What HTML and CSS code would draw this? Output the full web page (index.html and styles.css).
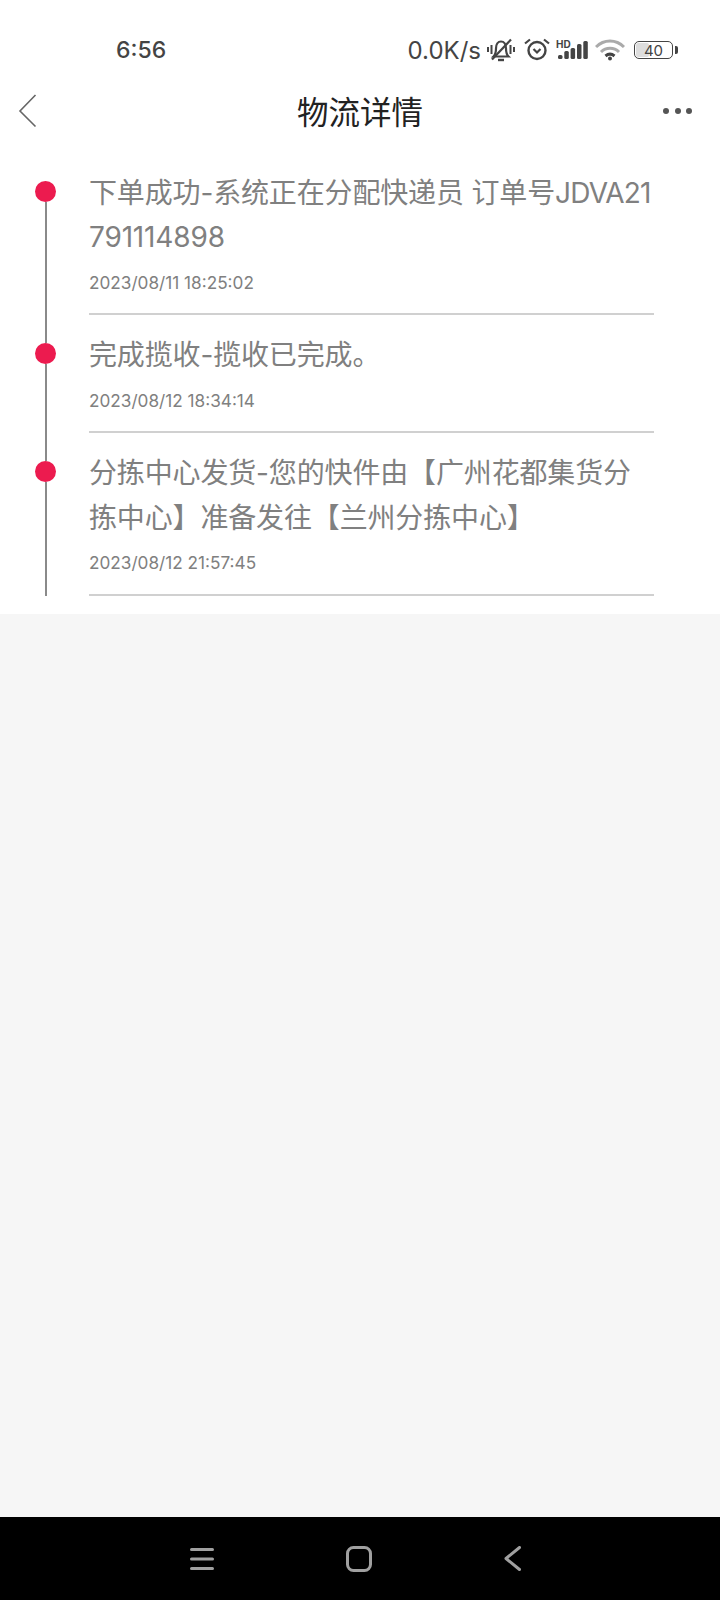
FILE: index.html
```html
<!DOCTYPE html>
<html lang="zh-CN">
<head>
    <meta charset="UTF-8">
    <meta name="viewport" content="width=device-width, initial-scale=1.0">
    <title>物流详情</title>
    <link rel="stylesheet" href="styles.css">
</head>
<body>
    <div class="phone">
        <!-- Status bar -->
        <div class="status-bar">
            <span class="clock">6:56</span>
            <div class="status-right">
                <span class="speed">0.0K/s</span>
                <svg class="icon-bell" width="30" height="24" viewBox="0 0 30 24" fill="none" stroke="#444" stroke-width="2.2">
                    <path d="M7.500 18.500c2-2 2.500-4 2.500-8 0-4 2-7 5-7s5 3 5 7c0 4 .5 6 2.500 8z"/>
                    <path d="M12 22h6" stroke-width="2.400"/>
                    <path d="M6 21.500L25 1.500"/>
                    <path d="M2 9v5M5.500 7v9M24.500 7v9M28 9v5" stroke-width="2"/>
                </svg>
                <svg class="icon-alarm" width="28" height="24" viewBox="0 0 28 24" fill="none" stroke="#444" stroke-width="2.4">
                    <circle cx="14" cy="12.500" r="8.500"/>
                    <path d="M10.500 11l3.500 3.500 3.500-3.500" stroke-width="2.200"/>
                    <path d="M2 5.500L7 1.500M26 5.500l-5-4" stroke-width="2.200"/>
                </svg>
                <svg class="icon-signal" width="33" height="22" viewBox="0 0 33 22">
                    <text x="1" y="9" class="hd-text">HD</text>
                    <rect x="3" y="16" width="4.500" height="4" rx="1.500" fill="#444"/>
                    <rect x="9.300" y="12" width="4.500" height="8" rx="1.500" fill="#444"/>
                    <rect x="15.600" y="9" width="4.500" height="11" rx="1.500" fill="#444"/>
                    <rect x="22" y="5" width="4.500" height="15" rx="1.500" fill="#444"/>
                    <rect x="28.300" y="2" width="4.500" height="18" rx="1.500" fill="#444"/>
                </svg>
                <svg class="icon-wifi" width="30" height="22" viewBox="0 0 30 22" fill="none" stroke="#aaa" stroke-width="3">
                    <path d="M1 8C9 0 21 0 29 8"/>
                    <path d="M6 13c5-5 13-5 18 0"/>
                    <path d="M10.500 17c3-2.500 6-2.500 9 0" stroke="#444"/>
                    <circle cx="15" cy="19.500" r="2" fill="#444" stroke="none"/>
                </svg>
                <div class="battery">
                    <div class="battery-body">
                        <div class="battery-fill"></div>
                        <span class="battery-num">40</span>
                    </div>
                    <div class="battery-tip"></div>
                </div>
            </div>
        </div>

        <!-- Title bar -->
        <div class="title-bar">
            <svg class="back" width="20" height="34" viewBox="0 0 20 34" fill="none" stroke="#666" stroke-width="1.600">
                <path d="M17.500 1L2 17l15.500 15.500"/>
            </svg>
            <h1 class="title">物流详情</h1>
            <div class="more"><i></i><i></i><i></i></div>
        </div>

        <!-- Tracking list -->
        <div class="track">
            <div class="track-item first">
                <div class="rail">
                    <div class="rail-top"></div>
                    <div class="dot"></div>
                    <div class="rail-line"></div>
                </div>
                <div class="track-body">
                    <div class="track-text no-wrap">下单成功-系统正在分配快递员 订单号<span class="order-no">JDVA21</span><br>791114898</div>
                    <div class="track-date">2023/08/11 18:25:02</div>
                </div>
            </div>
            <div class="track-item">
                <div class="rail">
                    <div class="rail-top"></div>
                    <div class="dot"></div>
                    <div class="rail-line"></div>
                </div>
                <div class="track-body">
                    <div class="track-text">完成揽收-揽收已完成。</div>
                    <div class="track-date">2023/08/12 18:34:14</div>
                </div>
            </div>
            <div class="track-item">
                <div class="rail">
                    <div class="rail-top"></div>
                    <div class="dot"></div>
                    <div class="rail-line"></div>
                </div>
                <div class="track-body">
                    <div class="track-text">分拣中心发货-您的快件由【广州花都集货分拣中心】准备发往【兰州分拣中心】</div>
                    <div class="track-date">2023/08/12 21:57:45</div>
                </div>
            </div>
        </div>

        <div class="empty"></div>

        <!-- Android nav bar -->
        <div class="nav-bar">
            <svg width="24" height="24" viewBox="0 0 24 24" fill="none" stroke="#a0a0a0" stroke-width="3" stroke-linecap="round">
                <path d="M1.500 2.500h21M1.500 12h21M1.500 21.500h21"/>
            </svg>
            <svg width="26" height="26" viewBox="0 0 26 26" fill="none" stroke="#a0a0a0" stroke-width="3">
                <rect x="1.500" y="1.500" width="23" height="23" rx="6"/>
            </svg>
            <svg width="17" height="25" viewBox="0 0 17 25" fill="none" stroke="#a0a0a0" stroke-width="3" stroke-linecap="round" stroke-linejoin="round">
                <path d="M15.500 1.500L2 12.500l13.500 11"/>
            </svg>
        </div>
    </div>
</body>
</html>
```

FILE: styles.css
```css
body {
    margin: 0;
    font-family: Inter, "Noto Sans CJK SC", sans-serif;
    background-color: #f6f6f6;
}
.phone {
    width: 720px;
    height: 1600px;
    display: flex;
    flex-direction: column;
    overflow: hidden;
}
.status-bar {
    height: 86px;
    flex: none;
    display: flex;
    justify-content: space-between;
    align-items: center;
    padding: 14px 42px 0 116px;
    box-sizing: border-box;
    background-color: white;
    color: #444;
}
.clock {
    font-size: 23px;
    font-weight: 500;
}
.status-right {
    display: flex;
    align-items: center;
}
.speed {
    font-size: 24px;
    margin-right: 5px;
}
.icon-alarm {
    margin-left: 7px;
}
.icon-signal {
    margin-left: 4px;
}
.icon-wifi {
    margin-left: 7px;
}
.hd-text {
    font-size: 10px;
    font-weight: bold;
    fill: #444;
}
.battery {
    display: flex;
    align-items: center;
    margin-left: 9px;
}
.battery-body {
    position: relative;
    width: 39px;
    height: 18px;
    box-sizing: border-box;
    border: 1.500px solid #444;
    border-radius: 5px;
    display: flex;
    align-items: center;
    justify-content: center;
}
.battery-fill {
    position: absolute;
    left: 1px;
    top: 1px;
    bottom: 1px;
    width: 13px;
    background-color: #ddd;
    border-radius: 2px;
}
.battery-num {
    position: relative;
    font-size: 15px;
    color: #444;
}
.battery-tip {
    width: 3px;
    height: 8px;
    margin-left: 2px;
    background-color: #444;
    border-radius: 0 2px 2px 0;
}
.title-bar {
    height: 50px;
    flex: none;
    box-sizing: border-box;
    display: grid;
    grid-template-columns: 1fr auto 1fr;
    align-items: center;
    padding: 0 28px 1px;
    background-color: white;
}
.back {
    margin-left: -10px;
}
.title {
    margin: 4px 0 0;
    font-size: 31.500px;
    line-height: 40px;
    font-weight: normal;
    color: #222;
}
.more {
    justify-self: end;
    display: flex;
    gap: 5.500px;
}
.more i {
    width: 6px;
    height: 6px;
    border-radius: 50%;
    background-color: #555;
}
.track {
    flex: none;
    background-color: white;
    padding: 16.500px 0 18px 34px;
}
.track-item {
    display: flex;
}
.rail {
    width: 22px;
    flex: none;
    display: flex;
    flex-direction: column;
    align-items: center;
    margin-right: 33px;
}
.rail-top {
    width: 2px;
    height: 28px;
    margin-left: 1px;
    background-color: #8a8a8a;
}
.first .rail-top {
    background-color: transparent;
}
.dot {
    width: 21px;
    height: 21px;
    flex: none;
    border-radius: 50%;
    background-color: #ec1b4f;
}
.rail-line {
    width: 2px;
    flex: 1;
    margin-left: 1px;
    background-color: #8a8a8a;
}
.track-body {
    width: 565px;
    padding: 18px 0 15.500px;
    border-bottom: 2px solid #d0d0d0;
}
.track-text {
    font-size: 28px;
    line-height: 44.500px;
    color: #808080;
    letter-spacing: -0.150px;
}
.no-wrap {
    white-space: nowrap;
}
.order-no {
    letter-spacing: -0.800px;
}
.track-date {
    font-size: 17.200px;
    line-height: 30px;
    margin-top: 8px;
    color: #808080;
}
.empty {
    flex: 1;
}
.nav-bar {
    height: 83px;
    flex: none;
    display: flex;
    align-items: center;
    justify-content: center;
    gap: 132px;
    padding-right: 10px;
    background-color: black;
}
```
